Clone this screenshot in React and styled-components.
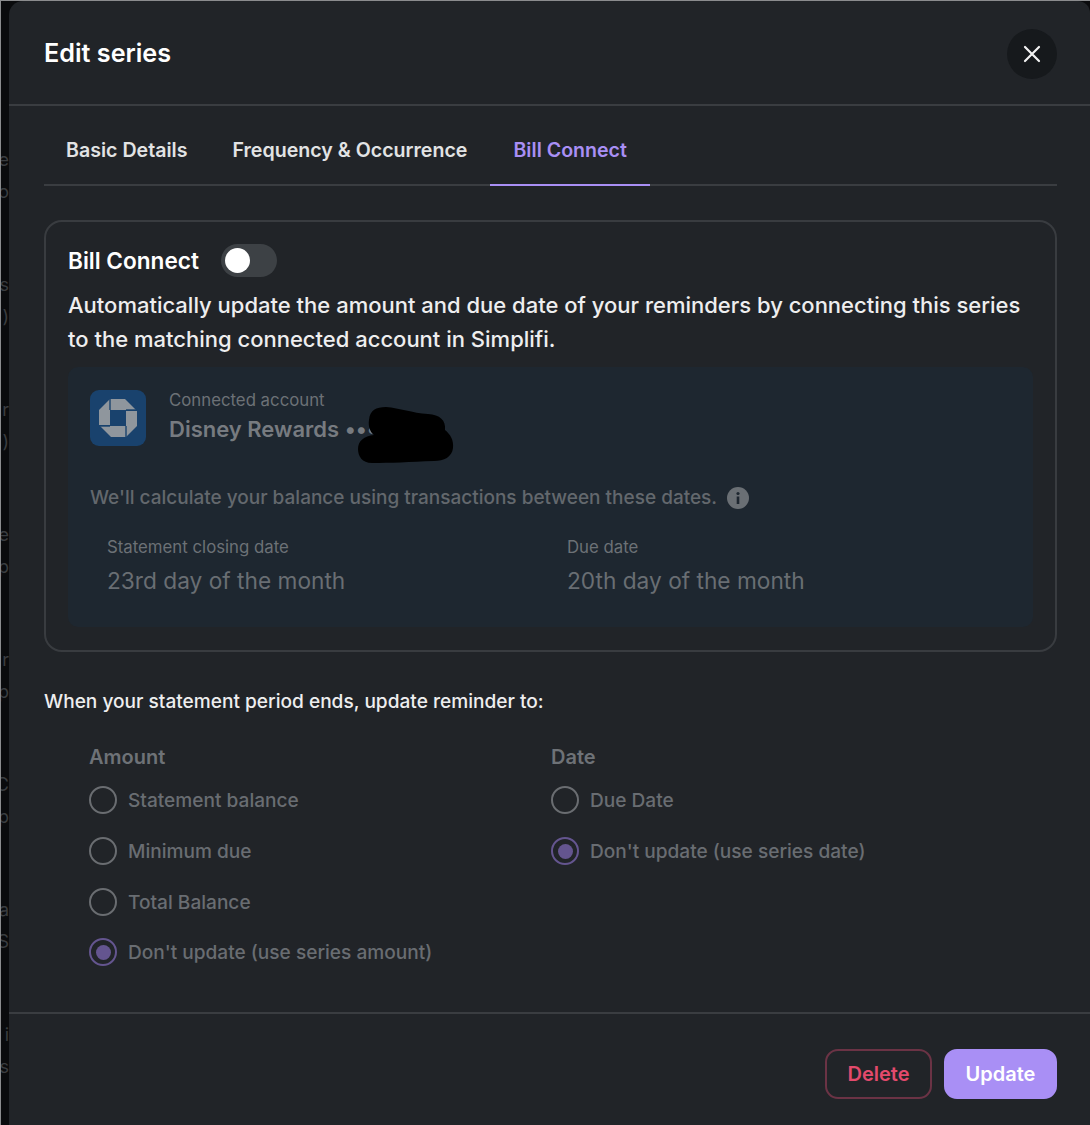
import React from "react";
import styled, { createGlobalStyle } from "styled-components";

const Global = createGlobalStyle`
  html, body { margin: 0; padding: 0; background: #0b0c0e; }
  * { box-sizing: border-box; }
  body { font-family: Inter, "Noto Sans", sans-serif; }
`;

const Page = styled.div`
  width: 1090px;
  height: 1125px;
  display: flex;
  overflow: hidden;
  border-top: 1px solid #8b8c8e;
  background: #0a0b0d;
`;

const Backdrop = styled.div`
  width: 9px;
  flex: none;
  border-left: 1px solid #8b8c8e;
  overflow: hidden;
  padding-top: 149px;
  display: flex;
  flex-direction: column;
  gap: 73px;
`;

const BackdropPair = styled.div`
  display: flex;
  flex-direction: column;
  width: 8px;
  gap: 12px;
`;

const BackdropGlyph = styled.span`
  display: block;
  height: 20px;
  line-height: 20px;
  font-size: 18px;
  color: #3a3d40;
  white-space: nowrap;
  text-align: right;
  direction: rtl;
`;

const Modal = styled.div`
  flex: 1;
  background: #212428;
  border-top-left-radius: 14px;
  border-top-right-radius: 12px;
  display: flex;
  flex-direction: column;
`;

const Header = styled.header`
  height: 105px;
  flex: none;
  padding: 3px 33px 0 35px;
  display: flex;
  align-items: center;
  justify-content: space-between;
  border-bottom: 2px solid #3a3d41;
`;

const Title = styled.h1`
  margin: 0 0 2px;
  font-size: 25.2px;
  font-weight: 600;
  color: #ffffff;
`;

const CloseButton = styled.button`
  width: 50px;
  height: 50px;
  border: 0;
  border-radius: 50%;
  background: #16191c;
  display: flex;
  align-items: center;
  justify-content: center;
  padding: 0;
`;

const Body = styled.div`
  flex: 1;
  padding: 0 33px 0 35px;
  display: flex;
  flex-direction: column;
`;

const Tabs = styled.nav`
  height: 80px;
  flex: none;
  display: flex;
  gap: 1px;
  border-bottom: 2px solid #3a3d41;
`;

const Tab = styled.div`
  height: 80px;
  padding: 10px ${(p) => (p.$active ? "23px" : "22px")} 0;
  display: flex;
  align-items: center;
  font-size: 19.6px;
  font-weight: 600;
  white-space: nowrap;
  color: ${(p) => (p.$active ? "#a98ff5" : "#e2e3e4")};
  border-bottom: 2px solid ${(p) => (p.$active ? "#a98ff5" : "transparent")};
`;

const Card = styled.section`
  margin-top: 34px;
  height: 432px;
  border: 2px solid #393c40;
  border-radius: 18px;
  padding: 21px 22px 22px 22px;
  display: flex;
  flex-direction: column;
`;

const ToggleRow = styled.div`
  display: flex;
  align-items: center;
  gap: 22px;
  height: 34px;
`;

const CardTitle = styled.div`
  font-size: 22.6px;
  font-weight: 600;
  color: #fff;
`;

const Toggle = styled.div`
  width: 56px;
  height: 33px;
  border-radius: 17px;
  background: #3d4145;
  padding: 4px;
  display: flex;
  align-items: center;
`;

const Knob = styled.div`
  width: 25px;
  height: 25px;
  border-radius: 50%;
  background: #fff;
`;

const Description = styled.p`
  margin: 11px 0 0;
  font-size: 22px;
  line-height: 34px;
  font-weight: 500;
  color: #eeeeef;
`;

const AccountPanel = styled.div`
  margin-top: 11px;
  height: 260px;
  flex: none;
  border-radius: 10px;
  background: #1e2730;
  padding: 23px 22px 22px;
  display: flex;
  flex-direction: column;
`;

const AccountRow = styled.div`
  display: flex;
  gap: 23px;
  align-items: center;
  height: 56px;
`;

const BankLogo = styled.div`
  width: 56px;
  height: 56px;
  border-radius: 9px;
  background: #19426d;
  display: flex;
  align-items: center;
  justify-content: center;
`;

const AccountInfo = styled.div`
  position: relative;
  display: flex;
  flex-direction: column;
  gap: 5px;
  padding-bottom: 4px;
`;

const Muted = styled.div`
  font-size: 16.8px;
  line-height: 20px;
  color: #6c7176;
`;

const AccountName = styled.div`
  font-size: 22px;
  line-height: 28px;
  font-weight: 600;
  color: #777b80;
`;

const Redaction = styled.svg`
  position: absolute;
  left: 189px;
  top: 16px;
`;

const HintRow = styled.div`
  margin-top: 40px;
  display: flex;
  align-items: center;
  gap: 10px;
  font-size: 19px;
  font-weight: 500;
  line-height: 24px;
  color: #63686d;
`;

const DatesGrid = styled.div`
  margin-top: 27px;
  padding-left: 17px;
  display: grid;
  grid-template-columns: 460px 1fr;
`;

const DateValue = styled.div`
  margin-top: 10px;
  font-size: 22.7px;
  line-height: 28px;
  color: #696e73;
`;

const SectionTitle = styled.div`
  margin-top: 37px;
  font-size: 19.1px;
  line-height: 24px;
  font-weight: 500;
  color: #eeeeef;
`;

const OptionsGrid = styled.div`
  margin-top: 32px;
  padding-left: 45px;
  display: grid;
  grid-template-columns: 462px 1fr;
`;

const OptionColumn = styled.div`
  display: flex;
  flex-direction: column;
`;

const ColumnTitle = styled.div`
  font-size: 20px;
  line-height: 24px;
  font-weight: 600;
  color: #6e7277;
  margin-bottom: 6px;
`;

const Option = styled.label`
  height: 50.7px;
  display: flex;
  align-items: center;
  gap: 11px;
  font-size: 19.1px;
  font-weight: 500;
  color: #696d72;
`;

const Radio = styled.span`
  width: 28px;
  height: 28px;
  flex: none;
  border-radius: 50%;
  border: 2px solid ${(p) => (p.$checked ? "#64558f" : "#6a6d71")};
  display: flex;
  align-items: center;
  justify-content: center;
  &::after {
    content: "";
    display: ${(p) => (p.$checked ? "block" : "none")};
    width: 15px;
    height: 15px;
    border-radius: 50%;
    background: #64558f;
  }
`;

const Footer = styled.footer`
  height: 113px;
  flex: none;
  border-top: 2px solid #3a3d41;
  padding: 35px 33px 0 0;
  display: flex;
  justify-content: flex-end;
  align-items: flex-start;
  gap: 12px;
`;

const Button = styled.button`
  height: 50px;
  width: ${(p) => (p.$primary ? "113px" : "107px")};
  border-radius: 13px;
  font-family: inherit;
  font-size: 20px;
  font-weight: 600;
  color: ${(p) => (p.$primary ? "#ffffff" : "#e34a6c")};
  background: ${(p) => (p.$primary ? "#a98ff5" : "transparent")};
  border: 2px solid ${(p) => (p.$primary ? "#a98ff5" : "#6b3345")};
`;

const backdropRows = [
  ["e", "o"], ["s", "("], ["r", "("], ["e", "p"], ["r", "p"], ["C", "p"], ["a", "S"], ["i", "s"],
];

const amountOptions = [
  ["Statement balance", false],
  ["Minimum due", false],
  ["Total Balance", false],
  ["Don't update (use series amount)", true],
];

const dateOptions = [
  ["Due Date", false],
  ["Don't update (use series date)", true],
];

const ChaseMark = () => (
  <svg width="40" height="40" viewBox="0 0 40 40" aria-hidden="true">
    <g fill="#8f969d">
      <path d="M12 1 H27 L38 12 H12 Z" />
      <path d="M39 13 V28 L28 39 V13 Z" />
      <path d="M28 39 H13 L2 28 H28 Z" />
      <path d="M1 27 V12 L12 1 V27 Z" />
    </g>
    <rect x="13" y="13" width="14" height="14" fill="#19426d" />
    <g stroke="#19426d" strokeWidth="1.4">
      <path d="M12 12 L12 1" />
      <path d="M28 12 L39 12" />
      <path d="M28 28 L28 39" />
      <path d="M12 28 L1 28" />
    </g>
  </svg>
);

const Options = ({ title, items }) => (
  <OptionColumn>
    <ColumnTitle>{title}</ColumnTitle>
    {items.map(([label, checked]) => (
      <Option key={label}>
        <Radio $checked={checked} />
        {label}
      </Option>
    ))}
  </OptionColumn>
);

export default function App() {
  return (
    <>
      <Global />
      <Page>
        <Backdrop>
          {backdropRows.map(([a, b], i) => (
            <BackdropPair key={i}>
              <BackdropGlyph>{a}</BackdropGlyph>
              <BackdropGlyph>{b}</BackdropGlyph>
            </BackdropPair>
          ))}
        </Backdrop>
        <Modal>
          <Header>
            <Title>Edit series</Title>
            <CloseButton aria-label="Close">
              <svg width="18" height="18" viewBox="0 0 18 18" aria-hidden="true">
                <path d="M2 2 L16 16 M16 2 L2 16" stroke="#f2f2f2" strokeWidth="2.2" strokeLinecap="round" />
              </svg>
            </CloseButton>
          </Header>
          <Body>
            <Tabs>
              <Tab>Basic Details</Tab>
              <Tab>Frequency &amp; Occurrence</Tab>
              <Tab $active>Bill Connect</Tab>
            </Tabs>
            <Card>
              <ToggleRow>
                <CardTitle>Bill Connect</CardTitle>
                <Toggle>
                  <Knob />
                </Toggle>
              </ToggleRow>
              <Description>
                Automatically update the amount and due date of your reminders by connecting this series
                to the matching connected account in Simplifi.
              </Description>
              <AccountPanel>
                <AccountRow>
                  <BankLogo>
                    <ChaseMark />
                  </BankLogo>
                  <AccountInfo>
                    <Muted>Connected account</Muted>
                    <AccountName>Disney Rewards ••••</AccountName>
                    <Redaction width="96" height="58" viewBox="0 0 96 58" aria-hidden="true">
                      <path
                        d="M11 14 C12 4 18 1 28 1 C42 2 54 7 70 8 C82 9 88 14 87 24 C92 28 96 34 95 42 C94 51 86 55 76 55 C52 56 32 57 14 57 C4 57 0 50 0 43 C0 35 6 30 16 29 C12 26 10 20 11 14 Z"
                        fill="#000"
                      />
                    </Redaction>
                  </AccountInfo>
                </AccountRow>
                <HintRow>
                  We'll calculate your balance using transactions between these dates.
                  <svg width="22" height="22" viewBox="0 0 22 22" aria-hidden="true">
                    <circle cx="11" cy="11" r="11" fill="#6a6f74" />
                    <rect x="9.7" y="9.5" width="2.6" height="7.5" fill="#1e2730" />
                    <circle cx="11" cy="6.5" r="1.6" fill="#1e2730" />
                  </svg>
                </HintRow>
                <DatesGrid>
                  <div>
                    <Muted>Statement closing date</Muted>
                    <DateValue>23rd day of the month</DateValue>
                  </div>
                  <div>
                    <Muted>Due date</Muted>
                    <DateValue>20th day of the month</DateValue>
                  </div>
                </DatesGrid>
              </AccountPanel>
            </Card>
            <SectionTitle>When your statement period ends, update reminder to:</SectionTitle>
            <OptionsGrid>
              <Options title="Amount" items={amountOptions} />
              <Options title="Date" items={dateOptions} />
            </OptionsGrid>
          </Body>
          <Footer>
            <Button>Delete</Button>
            <Button $primary>Update</Button>
          </Footer>
        </Modal>
      </Page>
    </>
  );
}
